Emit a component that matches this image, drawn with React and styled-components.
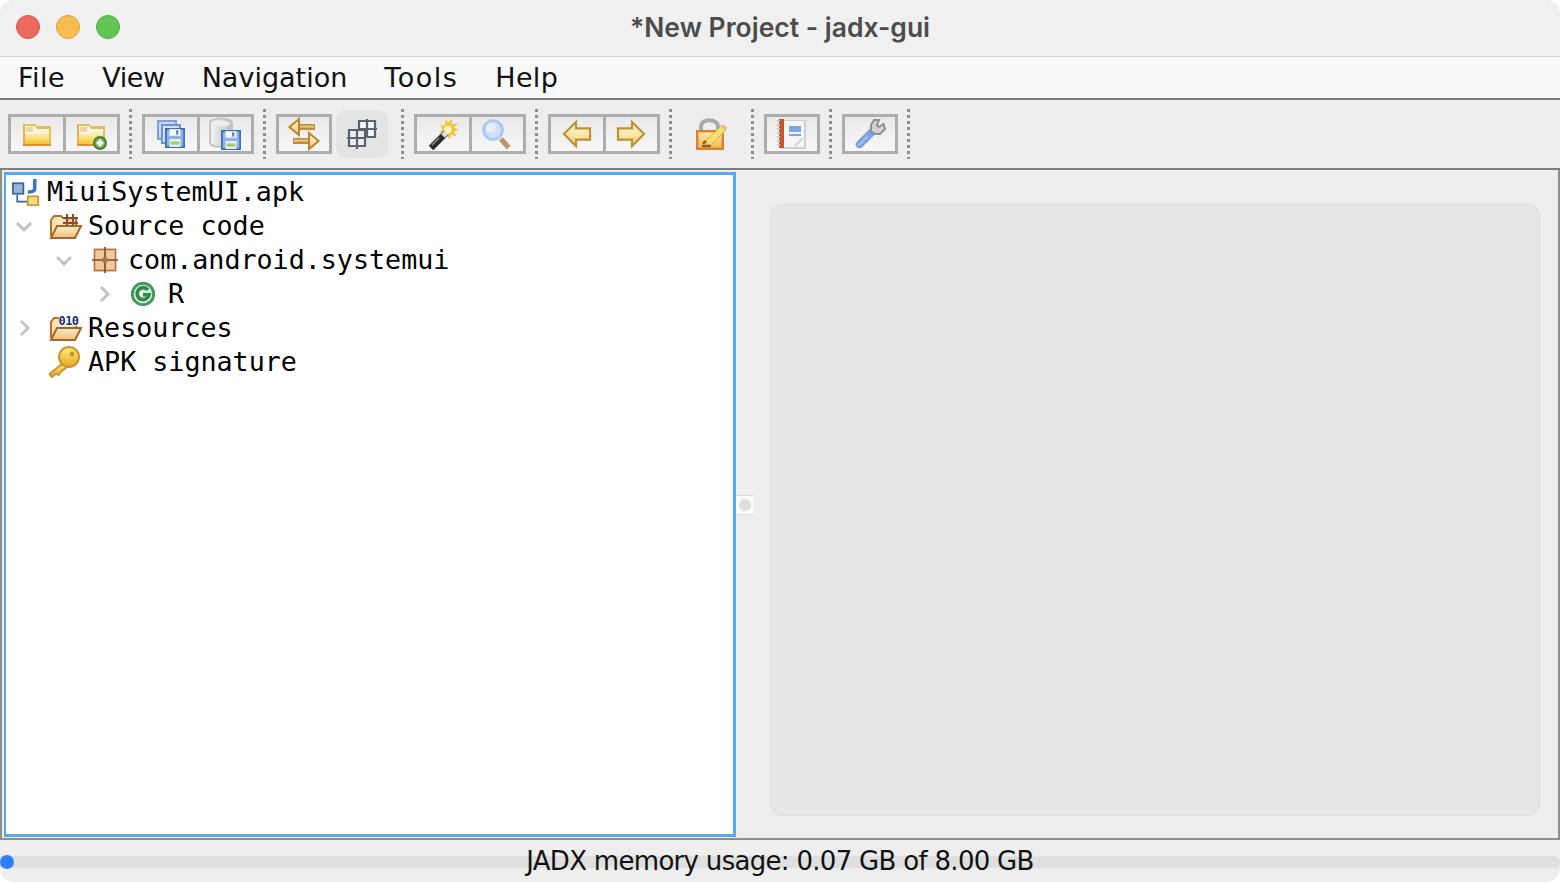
import React from 'react';
import styled, { createGlobalStyle } from 'styled-components';

const GlobalStyle = createGlobalStyle`
  html, body {
    margin: 0;
    padding: 0;
    background: #ffffff;
  }
  * {
    box-sizing: border-box;
  }
`;

/* ---------- toolbar icons, 16 units = 32px like the 2x pixel art ---------- */

const IconSvg = styled.svg`
  display: block;
  overflow: visible;
`;

const Icon = ({ size = 32, children }) => (
  <IconSvg width={size} height={size} viewBox="0 0 16 16">
    {children}
  </IconSvg>
);

const Grad = ({ id, from, to, x2 = 0, y2 = 1 }) => (
  <linearGradient id={id} x1="0" y1="0" x2={x2} y2={y2}>
    <stop offset="0" stopColor={from} />
    <stop offset="1" stopColor={to} />
  </linearGradient>
);

const FolderShape = ({ id }) => (
  <>
    <defs>
      <Grad id={id} from="#fff8dc" to="#f2c62e" />
    </defs>
    <path d="M1 3h6l1 1h7v10H1z" fill="#e5bc5e" />
    <path d="M2 4h5l1 1.500h6V13H2z" fill="#fdf7e4" />
    <rect x="2.500" y="4.500" width="3.500" height="2.500" fill="#eed6a0" />
    <path d="M2 8h5l1-1.500h6V13H2z" fill={`url(#${id})`} />
    <rect x="1" y="13" width="14" height="1" fill="#e08c36" />
    <rect x="1" y="4" width="1" height="9" fill="#e6b248" />
  </>
);

const OpenIcon = () => (
  <Icon>
    <FolderShape id="fo1" />
  </Icon>
);

const AddFolderIcon = () => (
  <Icon>
    <FolderShape id="fo2" />
    <circle cx="12.500" cy="12.500" r="3.500" fill="#47812f" />
    <circle cx="12.500" cy="12.500" r="2.500" fill="#74ae58" />
    <path d="M11.800 10.800h1.400v1h1v1.400h-1v1h-1.400v-1h-1v-1.400h1z" fill="#ffffff" />
  </Icon>
);

const Floppy = ({ x, y, size = 10 }) => (
  <g transform={`translate(${x} ${y}) scale(${size / 9})`}>
    <rect x="0" y="0" width="9" height="9" fill="#3f6fb5" />
    <rect x="0.800" y="0.800" width="7.400" height="7.400" fill="#8db2e4" />
    <rect x="2" y="0.500" width="5" height="3" fill="#f4f7fb" />
    <rect x="5" y="1" width="1" height="2" fill="#5b83bf" />
    <rect x="2" y="5" width="5" height="3.500" fill="#f0f4ee" />
    <rect x="2.500" y="6" width="4" height="1.500" fill="#a3cf6c" />
  </g>
);

const SaveAllIcon = () => (
  <Icon>
    <rect x="1" y="1" width="10" height="10" fill="#7d9fd6" />
    <rect x="2" y="2" width="8" height="8" fill="#c9d9f2" />
    <rect x="3" y="3" width="10" height="10" fill="#6f93cf" />
    <rect x="4" y="4" width="8" height="8" fill="#d5e2f5" />
    <Floppy x="5" y="5" />
  </Icon>
);

const SaveAsIcon = () => (
  <Icon>
    <defs>
      <Grad id="db1" from="#f6f6f6" to="#bdbdbd" x2={1} y2={0} />
    </defs>
    <path d="M0.500 2.500c0-3 11-3 11 0v10c0 2.500-11 2.500-11 0z" fill="url(#db1)" stroke="#c4c4c4" strokeWidth="1" />
    <ellipse cx="6" cy="2.800" rx="4.500" ry="1.500" fill="#ededed" />
    <Floppy x="6" y="6" />
  </Icon>
);

const SyncIcon = () => (
  <Icon>
    <defs>
      <Grad id="sy1" from="#fff6d2" to="#f3cf78" />
    </defs>
    <rect x="5" y="3" width="8.500" height="3" fill="#c18b38" />
    <rect x="5" y="3.800" width="8" height="1" fill="#e9c889" />
    <path d="M5.500 0.500 0.700 4.500l4.800 4z" fill="url(#sy1)" stroke="#bb842e" strokeWidth="1" />
    <rect x="2.500" y="10" width="8.500" height="3" fill="#c18b38" />
    <rect x="3" y="10.800" width="8" height="1" fill="#e9c889" />
    <path d="M10.500 7.500l4.800 4-4.800 4z" fill="url(#sy1)" stroke="#bb842e" strokeWidth="1" />
  </Icon>
);

const GridIcon = () => (
  <Icon>
    <rect x="6.500" y="1.500" width="8" height="8" fill="#f4f7fd" />
    <rect x="1.500" y="6" width="8" height="8" fill="#e9eff9" />
    <path
      d="M6.500 6V1.500h8v8H9.500M10.500 0.500v9M6.500 5.500h9M1.500 6h8v8h-8zM5.500 6v9.500M0.500 10h9"
      fill="none"
      stroke="#5f6368"
      strokeWidth="1.100"
    />
  </Icon>
);

const WandIcon = () => (
  <Icon>
    <path d="M9.500 0l.9 2.300L12.500.6l-.1 2.500 2.900-.6-1.700 2.400 2.400 1-2.400.9 1.100 2.400-2.600-.9-.6 2.400-1.400-2-2 1.400.3-2.600-2.400-.4 2-1.500L6.400 3.600l2.400.2z" fill="#f3c63a" />
    <circle cx="10.500" cy="5.800" r="1.900" fill="#fff4c8" />
    <path d="M9.500 7.500 2 15" stroke="#2b2b2b" strokeWidth="3.200" />
    <path d="M9.800 7.200 8 9" stroke="#dcdcdc" strokeWidth="2.600" />
    <path d="M6 10 2.500 13.500" stroke="#8a8a8a" strokeWidth="0.800" />
  </Icon>
);

const SearchIcon = () => (
  <Icon>
    <circle cx="6" cy="6" r="4.700" fill="#cfe2f9" stroke="#a9c8ee" strokeWidth="1.400" />
    <circle cx="5" cy="5" r="2.400" fill="#e4eefc" />
    <path d="M10 10.500 13.800 14.800" stroke="#bd9168" strokeWidth="2.600" />
  </Icon>
);

const BackIcon = () => (
  <Icon>
    <defs>
      <Grad id="ar1" from="#fffbe2" to="#f6d27a" />
    </defs>
    <path d="M7.500 2 1.500 8l6 6v-3.200h7v-5.600h-7z" fill="url(#ar1)" stroke="#bd9332" strokeWidth="1.100" />
  </Icon>
);

const ForwardIcon = () => (
  <Icon>
    <defs>
      <Grad id="ar2" from="#fffbe2" to="#f6d27a" />
    </defs>
    <path d="M8.500 2l6 6-6 6v-3.200h-7v-5.600h7z" fill="url(#ar2)" stroke="#bd9332" strokeWidth="1.100" />
  </Icon>
);

const LockIcon = () => (
  <Icon>
    <defs>
      <Grad id="lk1" from="#fcecb0" to="#f0b654" />
    </defs>
    <path d="M2.500 6.500V4.500c0-4.500 8.500-4.500 8.500 0v2" fill="none" stroke="#a9a9a9" strokeWidth="2" />
    <rect x="0.600" y="6.600" width="12.800" height="8.800" fill="url(#lk1)" stroke="#d8822f" strokeWidth="1.200" />
    <path d="M4.500 12 12.500 4 15 6 7 14z" fill="#f8e070" stroke="#e2b040" strokeWidth="0.500" />
    <path d="M12.500 4l1-.8 2 1.500-.5 1.300z" fill="#e8b89a" />
    <path d="M3 14h4.500" stroke="#8a5a24" strokeWidth="1.200" />
    <path d="M3.500 12.800 5 11.500" stroke="#8a5a24" strokeWidth="1.200" />
  </Icon>
);

const LogIcon = () => (
  <Icon>
    <rect x="2.500" y="1" width="12.500" height="14.500" fill="#d0d0d0" />
    <rect x="2.500" y="1.500" width="11.500" height="13" fill="#f6f6f6" />
    <rect x="1.500" y="0.500" width="2.500" height="14.500" fill="#c05a2d" />
    <path d="M0.500 1.500h1.500M0.500 3.500h1.500M0.500 5.500h1.500M0.500 7.500h1.500M0.500 9.500h1.500M0.500 11.500h1.500M0.500 13.500h1.500" stroke="#c4c4c4" strokeWidth="0.900" />
    <rect x="6.500" y="4" width="6" height="3" fill="#7fa5dc" />
    <rect x="6.500" y="8" width="6" height="1" fill="#7fa5dc" />
    <path d="M9.500 14 13.500 10" stroke="#d4d4d4" strokeWidth="1" />
  </Icon>
);

const WrenchIcon = () => (
  <Icon>
    <path d="M9.500 5.500 10.500 6.500 4 14.500 1.500 15 .7 13z" fill="#a3bfee" />
    <path d="M2.800 13.200 9 7" stroke="#7c9fdd" strokeWidth="3.800" strokeLinecap="round" />
    <path d="M2 14 7 9" stroke="#a9c4ef" strokeWidth="0.900" />
    <path d="M10 1h2.500l-1 2.500.8 1 2.400-1.500.8 2.500-2.500 2.500h-2.500L8.500 6.500V3.500z" fill="#d2d2d2" stroke="#8e8e8e" strokeWidth="1" />
  </Icon>
);

/* ---------- tree icons ---------- */

const ApkIcon = () => (
  <Icon size={28}>
    <rect x="0.500" y="3" width="6" height="6" fill="#9db4d6" stroke="#39679f" strokeWidth="1" />
    <path d="M3 9.500V13.500h6" fill="none" stroke="#39679f" strokeWidth="1" />
    <path d="M13 0.500v5.500c0 1.500-1.500 2-4 2" fill="none" stroke="#3f78b8" strokeWidth="2" />
    <rect x="9" y="10.500" width="6" height="5" fill="#f6dd83" stroke="#c39a3a" strokeWidth="1" />
  </Icon>
);

const OpenFolder = ({ id, children }) => (
  <Icon>
    <defs>
      <Grad id={id} from="#fdeec8" to="#efc078" />
    </defs>
    <path d="M0.500 13V5L2 3h3.500l1 1h6.500v4" fill="#f8e4b8" stroke="#b5712a" strokeWidth="1" />
    {children}
    <path d="M3.500 8H15.500L12.500 14H0.500z" fill={`url(#${id})`} stroke="#a9642a" strokeWidth="1" />
  </Icon>
);

const SourceIcon = () => (
  <OpenFolder id="of1">
    <path d="M6.500 4h7.500M6.500 6.500h7.500M8.500 2v6M11.500 2v6" stroke="#8d4a2d" strokeWidth="1" />
    <rect x="9" y="4.500" width="2" height="1.500" fill="#eccba0" />
  </OpenFolder>
);

const BinaryText = styled.text`
  font-family: "DejaVu Sans Mono", monospace;
  font-size: 6px;
  font-weight: 700;
  fill: #14306e;
  letter-spacing: -0.300px;
`;

const ResourcesIcon = () => (
  <OpenFolder id="of2">
    <rect x="4.500" y="1" width="10" height="6" fill="#ffffff" />
    <BinaryText x="4.300" y="6.500">010</BinaryText>
  </OpenFolder>
);

const PackageIcon = () => (
  <Icon size={26}>
    <rect x="1.500" y="1.500" width="13" height="13" fill="#eccba0" stroke="#b66f3a" strokeWidth="1" />
    <path d="M8 0v16M0 8h16" stroke="#7c4a2d" strokeWidth="1" />
    <rect x="6.500" y="6.500" width="3" height="3" fill="#a9744a" />
  </Icon>
);

const ClassIcon = () => (
  <Icon size={26}>
    <circle cx="8" cy="8" r="7.500" fill="#3f9a5a" />
    <circle cx="8" cy="8" r="5.700" fill="#e2f2e5" />
    <path d="M11 5.500A3.700 3.700 0 1 0 11.700 8.500H8" fill="none" stroke="#2f8a4c" strokeWidth="2.200" />
  </Icon>
);

const KeyIcon = () => (
  <Icon>
    <defs>
      <Grad id="ky1" from="#fdeb80" to="#e5a824" />
    </defs>
    <path d="M7 9 .8 14 2 15.500 4 13.800 5.300 14.500 6.500 12.800 10 10z" fill="url(#ky1)" stroke="#c9962e" strokeWidth="1" />
    <circle cx="10.500" cy="5.500" r="5" fill="url(#ky1)" stroke="#c9962e" strokeWidth="1" />
    <circle cx="12" cy="4" r="1.200" fill="#c9962e" />
  </Icon>
);

const Chevron = ({ open }) => (
  <IconSvg width="18" height="18" viewBox="0 0 18 18">
    <path
      d={open ? 'M2 6l7 7 7-7' : 'M6 2l7 7-7 7'}
      fill="none"
      stroke="#c2c2c2"
      strokeWidth="3"
    />
  </IconSvg>
);

/* ---------- window ---------- */

const Window = styled.div`
  width: 1560px;
  height: 882px;
  display: flex;
  flex-direction: column;
  background: #eeeeee;
  border-radius: 14px;
  overflow: hidden;
`;

const TitleBar = styled.div`
  height: 57px;
  flex: none;
  display: grid;
  grid-template-columns: 1fr auto 1fr;
  align-items: center;
  padding: 0 16px 2px;
  background: #f0f0f0;
  border-bottom: 1px solid #d4d4d4;
`;

const Lights = styled.div`
  display: flex;
  gap: 16px;
`;

const Light = styled.span`
  width: 24px;
  height: 24px;
  border-radius: 50%;
  background: ${(p) => p.$color};
  border: 1px solid ${(p) => p.$edge};
`;

const Title = styled.div`
  font-family: Inter, Roboto, "Liberation Sans", sans-serif;
  font-size: 26.500px;
  font-weight: 600;
  color: #4c4c4c;
`;

const MenuBar = styled.div`
  height: 41px;
  flex: none;
  display: flex;
  align-items: center;
  gap: 37px;
  padding-left: 18px;
  background: #fafafa;
`;

const MenuItem = styled.span`
  font-family: "DejaVu Sans", sans-serif;
  font-size: 27px;
  color: #111111;
  letter-spacing: ${(p) => p.$track}px;
`;

const Toolbar = styled.div`
  height: 72px;
  flex: none;
  display: flex;
  align-items: center;
  padding-left: 8px;
  background: #eeeeee;
  border-top: 2px solid #7f7f7f;
  border-bottom: 2px solid #7f7f7f;
`;

const Group = styled.div`
  display: flex;
  width: ${(p) => p.$count * 56}px;
  height: 40px;
  border: 3px solid #adadad;
`;

const ToolButton = styled.div`
  flex: 1;
  display: flex;
  align-items: center;
  justify-content: center;
  background: linear-gradient(#e9e9e9, #f7f7f7);

  & + & {
    border-left: 3px solid #adadad;
  }
`;

const FlatButton = styled.div`
  width: 52px;
  height: 48px;
  margin-left: 4px;
  display: flex;
  align-items: center;
  justify-content: center;
  background: #e4e4e4;
  border-radius: 10px;
`;

const PlainButton = styled.div`
  width: 69px;
  height: 40px;
  padding-left: 14px;
  display: flex;
  align-items: center;
`;

const Separator = styled.div`
  width: 3px;
  height: 50px;
  margin: 0 10px 0 ${(p) => p.$left ?? 9}px;
  background: repeating-linear-gradient(#8e8e8e 0 3px, transparent 3px 6px);
`;

const Main = styled.div`
  flex: 1;
  min-height: 0;
  display: flex;
  padding: 2px 0 1px 2px;
  background: #eeeeee;
  border-left: 2px solid #8e8e8e;
  border-right: 2px solid #8e8e8e;
  border-bottom: 2px solid #8e8e8e;
`;

const TreePane = styled.div`
  width: 732px;
  flex: none;
  background: #ffffff;
  border: 3px solid #5aa9ef;
  border-left-width: 2px;
`;

const Row = styled.div`
  height: 34px;
  display: flex;
  align-items: center;
  padding-left: ${(p) => (p.$depth === 0 ? 6 : p.$depth * 40 - 31)}px;
`;

const ChevronSlot = styled.span`
  width: 35px;
  flex: none;
  display: flex;
`;

const IconSlot = styled.span`
  width: ${(p) => p.$width}px;
  flex: none;
  padding-left: ${(p) => p.$inset}px;
  margin-left: ${(p) => -p.$pull}px;
  margin-right: ${(p) => p.$pull}px;
`;

const RowLabel = styled.span`
  font-family: "DejaVu Sans Mono", monospace;
  font-size: 26.700px;
  line-height: 34px;
  color: #000000;
  white-space: pre;
`;

const Divider = styled.div`
  width: 20px;
  flex: none;
  display: flex;
  align-items: center;
`;

const Grip = styled.div`
  width: 18px;
  height: 20px;
  display: flex;
  align-items: center;
  justify-content: center;
  background: #fafafa;
  border-top: 1px solid #dddddd;
  border-bottom: 1px solid #dddddd;

  &::after {
    content: "";
    width: 12px;
    height: 12px;
    border-radius: 50%;
    background: #dedede;
  }
`;

const RightPane = styled.div`
  flex: 1;
  padding: 32px 18px 21px 14px;
`;

const EmptyPanel = styled.div`
  height: 100%;
  background: #e6e6e6;
  border: 1px solid #dfdfdf;
  border-radius: 12px;
`;

const StatusBar = styled.div`
  height: 42px;
  flex: none;
  display: grid;
  align-items: center;
  padding-top: 2px;
  background: #eeeeee;
`;

const Progress = styled.div`
  grid-area: 1 / 1;
  height: 12px;
  background: #dfdfdf;
  border-radius: 0 8px 8px 0;
  display: flex;
  align-items: center;
`;

const ProgressKnob = styled.div`
  width: 14px;
  height: 14px;
  border-radius: 50%;
  background: #2b7fff;
`;

const StatusText = styled.div`
  grid-area: 1 / 1;
  text-align: center;
  font-family: "DejaVu Sans", sans-serif;
  font-size: 26px;
  letter-spacing: -0.700px;
  color: #111111;
  transform: translateY(-1px);
`;

const tree = [
  { depth: 0, label: 'MiuiSystemUI.apk', icon: <ApkIcon />, width: 35 },
  { depth: 1, label: 'Source code', icon: <SourceIcon />, open: true },
  { depth: 2, label: 'com.android.systemui', icon: <PackageIcon />, open: true, inset: 2 },
  { depth: 3, label: 'R', icon: <ClassIcon />, open: false },
  { depth: 1, label: 'Resources', icon: <ResourcesIcon />, open: false },
  { depth: 1, label: 'APK signature', icon: <KeyIcon />, leaf: true, pull: 2 },
];

const menus = [
  { label: 'File', track: 0.5 },
  { label: 'View', track: -0.4 },
  { label: 'Navigation', track: 0 },
  { label: 'Tools', track: 1.5 },
  { label: 'Help', track: 0.3 },
];

export default function App() {
  return (
    <>
      <GlobalStyle />
      <Window>
        <TitleBar>
          <Lights>
            <Light $color="#ee6a5f" $edge="#d8574d" />
            <Light $color="#f6bd4f" $edge="#dfa53a" />
            <Light $color="#61c554" $edge="#52ae45" />
          </Lights>
          <Title>*New Project - jadx-gui</Title>
        </TitleBar>

        <MenuBar>
          {menus.map((m) => (
            <MenuItem key={m.label} $track={m.track}>{m.label}</MenuItem>
          ))}
        </MenuBar>

        <Toolbar>
          <Group $count={2}>
            <ToolButton><OpenIcon /></ToolButton>
            <ToolButton><AddFolderIcon /></ToolButton>
          </Group>
          <Separator />
          <Group $count={2}>
            <ToolButton><SaveAllIcon /></ToolButton>
            <ToolButton><SaveAsIcon /></ToolButton>
          </Group>
          <Separator />
          <Group $count={1}>
            <ToolButton><SyncIcon /></ToolButton>
          </Group>
          <FlatButton><GridIcon /></FlatButton>
          <Separator $left={13} />
          <Group $count={2}>
            <ToolButton><WandIcon /></ToolButton>
            <ToolButton><SearchIcon /></ToolButton>
          </Group>
          <Separator />
          <Group $count={2}>
            <ToolButton><BackIcon /></ToolButton>
            <ToolButton><ForwardIcon /></ToolButton>
          </Group>
          <Separator />
          <PlainButton><LockIcon /></PlainButton>
          <Separator $left={0} />
          <Group $count={1}>
            <ToolButton><LogIcon /></ToolButton>
          </Group>
          <Separator />
          <Group $count={1}>
            <ToolButton><WrenchIcon /></ToolButton>
          </Group>
          <Separator />
        </Toolbar>

        <Main>
          <TreePane>
            {tree.map((node) => (
              <Row key={node.label} $depth={node.depth}>
                {node.depth > 0 && (
                  <ChevronSlot>
                    {!node.leaf && <Chevron open={node.open} />}
                  </ChevronSlot>
                )}
                <IconSlot $width={node.width ?? 38} $inset={node.inset ?? 0} $pull={node.pull ?? 0}>
                  {node.icon}
                </IconSlot>
                <RowLabel>{node.label}</RowLabel>
              </Row>
            ))}
          </TreePane>
          <Divider>
            <Grip />
          </Divider>
          <RightPane>
            <EmptyPanel />
          </RightPane>
        </Main>

        <StatusBar>
          <Progress>
            <ProgressKnob />
          </Progress>
          <StatusText>JADX memory usage: 0.07 GB of 8.00 GB</StatusText>
        </StatusBar>
      </Window>
    </>
  );
}
